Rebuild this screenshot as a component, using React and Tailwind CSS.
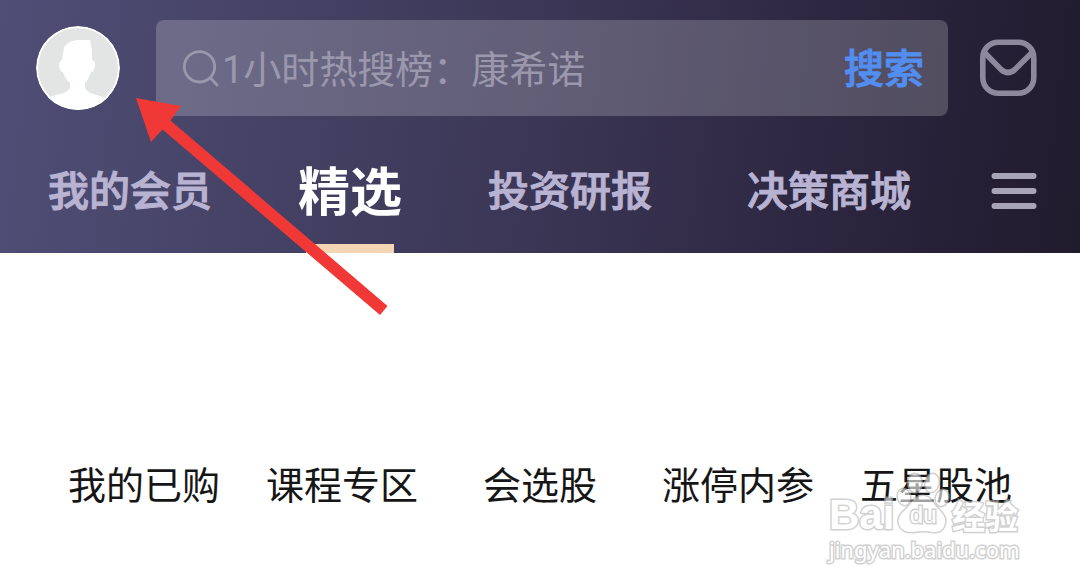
import React, { useState } from "react";

const leftTabs = ["我的会员", "精选", "投资研报"];
const rightTabs = ["决策商城"];
const shortcuts = ["我的已购", "课程专区", "会选股", "涨停内参", "五星股池"];

const SearchIcon = () => (
  <svg className="h-10 w-10 shrink-0" viewBox="0 0 40 40" fill="none" stroke="#9b97ad" strokeWidth="2.8">
    <circle cx="17.5" cy="18.8" r="15.2" />
    <path d="M28.5 30l6.500 7" strokeLinecap="round" />
  </svg>
);

const MailIcon = () => (
  <svg className="h-[58px] w-[58px]" viewBox="0 0 58 58" fill="none" stroke="#8d889c" strokeWidth="5.6">
    <rect x="3.8" y="3.3" width="51" height="51" rx="15.5" />
    <path d="M5 13l17 17.5q7 6 14 0L53.5 13" />
  </svg>
);

const MenuIcon = () => (
  <svg className="h-10 w-[46px]" viewBox="0 0 46 40" stroke="#a8a4b7" strokeWidth="6" strokeLinecap="round">
    <path d="M3.5 5h39M3.5 20h39M3.5 35h39" />
  </svg>
);

const AvatarIcon = () => (
  <svg className="h-[84px] w-[84px]" viewBox="0 0 84 84">
    <circle cx="42" cy="42" r="42" fill="#ffffff" />
    <circle cx="42" cy="42" r="40" fill="#e3e5e5" />
    <path
      fill="#ffffff"
      d="M28 22q4-8 15-8h11l2 10v10q4 1 3 6-1 6-4 6-2 7-6 11v5q2 5 12 7 8 2 13 5v16H7V74q5-3 13-5 12-2 14-7v-5q-5-4-7-11-3 0-4-6 0-5 3-6z"
    />
  </svg>
);

const Tab = ({ label, active, onClick }) => (
  <button
    type="button"
    onClick={onClick}
    className={`relative h-[137px] whitespace-nowrap pt-2 ${
      active
        ? "text-[52px] font-bold text-white"
        : "text-[41px] font-medium text-[#b8b3d2] [-webkit-text-stroke:1px_#b8b3d2]"
    }`}
  >
    {label}
    {active && <span className="absolute bottom-0 left-1/2 h-[9px] w-[88px] -translate-x-1/2 bg-[#f4d5b4]" />}
  </button>
);

const Watermark = () => (
  <div className="pointer-events-none absolute right-[58px] top-[219px] w-[193px] text-white opacity-60 [-webkit-text-stroke:3px_#b4b4b4] [paint-order:stroke_fill]">
    <div className="flex h-[62px] items-end justify-between pr-1 font-bold leading-[38px]">
      <span className="font-['Liberation_Sans'] text-[42px]">Bai</span>
      <span className="relative flex h-[62px] w-[54px] items-end justify-center">
        <svg className="absolute inset-0 h-full w-full" viewBox="0 0 54 62" fill="#ffffff" stroke="#b4b4b4" strokeWidth="3">
          <ellipse cx="8" cy="25" rx="6" ry="8" transform="rotate(-15 8 25)" />
          <ellipse cx="19" cy="11" rx="6.5" ry="9" />
          <ellipse cx="36" cy="11" rx="6.5" ry="9" transform="rotate(12 36 11)" />
          <ellipse cx="46" cy="26" rx="6" ry="8" transform="rotate(15 46 26)" />
          <path d="M27 24q7 0 11 8 3 4 7 8 5 5 4 11-2 10-12 9-10-2-20 0-11 1-14-8-2-7 5-13 5-4 8-9 4-6 11-6z" />
        </svg>
        <span className="relative font-['Liberation_Sans'] text-[24px] font-normal">du</span>
      </span>
      <span className="text-[33px]">经验</span>
    </div>
    <div className="font-['Noto_Sans'] text-[22px] leading-[30px]">jingyan.baidu.com</div>
  </div>
);

const Arrow = () => (
  <svg className="pointer-events-none absolute left-[136px] top-[98px] h-[218px] w-[252px]" viewBox="0 0 252 218">
    <path fill="#f03837" d="M0 0L45 8L34.500 22.500L251.500 208L244 217L26.500 31.500L15 44z" />
  </svg>
);

const App = () => {
  const [activeTab, setActiveTab] = useState("精选");

  return (
    <div className="relative min-h-screen bg-white font-['Noto_Sans_CJK_SC',sans-serif]">
      <header className="bg-linear-[97deg,#504e76_0%,#3b3655_50%,#2a243d_80%,#201b2d_100%] pt-5">
        {/* ======= Search ======= */}
        <div className="flex items-center pl-9 pr-[43px]">
          <button type="button" aria-label="我的" className="shrink-0 overflow-hidden rounded-full">
            <AvatarIcon />
          </button>
          <form
            onSubmit={(e) => e.preventDefault()}
            className="ml-9 mr-[31px] flex h-24 min-w-0 flex-1 items-center rounded-lg bg-white/20 pl-[26px] pr-6"
          >
            <SearchIcon />
            <input
              type="text"
              aria-label="搜索"
              placeholder="1小时热搜榜：康希诺"
              className="h-16 min-w-0 flex-1 bg-transparent pt-1 font-[Roboto,'Noto_Sans_CJK_SC',sans-serif] text-[38px] text-white outline-none placeholder:text-[#9b97ad]"
            />
            <button
              type="submit"
              className="shrink-0 pb-1 text-[40px] font-medium text-[#528df0] [-webkit-text-stroke:1px_#528df0]"
            >
              搜索
            </button>
          </form>
          <button type="button" aria-label="消息" className="shrink-0">
            <MailIcon />
          </button>
        </div>

        {/* ======= Tabs ======= */}
        <nav className="flex items-center justify-between pl-12 pr-[43px]">
          <div className="flex gap-[86px]">
            {leftTabs.map((label) => (
              <Tab key={label} label={label} active={activeTab === label} onClick={() => setActiveTab(label)} />
            ))}
          </div>
          <div className="flex gap-20">
            {rightTabs.map((label) => (
              <Tab key={label} label={label} active={activeTab === label} onClick={() => setActiveTab(label)} />
            ))}
            <button type="button" aria-label="更多" className="pt-3">
              <MenuIcon />
            </button>
          </div>
        </nav>
      </header>

      {/* ======= Shortcuts ======= */}
      <main className="relative px-[45px] pb-12 pt-[205px]">
        <div className="grid grid-cols-5">
          {shortcuts.map((label) => (
            <a key={label} href="#" className="whitespace-nowrap text-center text-[38px] leading-[50px] text-[#161616]">
              {label}
            </a>
          ))}
        </div>
        <Watermark />
      </main>

      <Arrow />
    </div>
  );
};

export default App;
